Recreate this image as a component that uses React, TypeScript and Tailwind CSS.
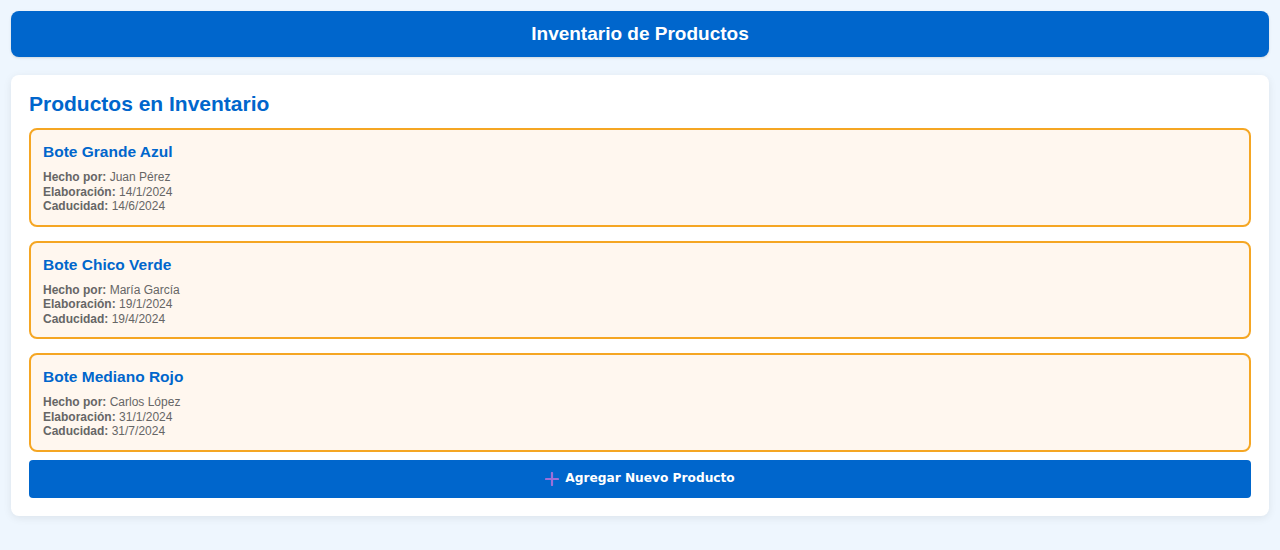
const products = [
  { name: "Bote Grande Azul", by: "Juan Pérez", made: "14/1/2024", exp: "14/6/2024" },
  { name: "Bote Chico Verde", by: "María García", made: "19/1/2024", exp: "19/4/2024" },
  { name: "Bote Mediano Rojo", by: "Carlos López", made: "31/1/2024", exp: "31/7/2024" },
];

const App = () => {
  return (
    <div className="min-h-[550px] bg-[#eef6fe] p-[11px] font-['Liberation_Sans',Arial,sans-serif]">
      <header className="flex h-[46px] items-center justify-center rounded-lg bg-[#0066cc] text-white shadow-sm">
        <h1 className="text-[19px] font-bold">Inventario de Productos</h1>
      </header>

      <main className="mt-[18px] rounded-lg bg-white px-[18px] pb-[18px] pt-[17px] shadow-[0_2px_8px_rgba(0,0,0,0.08)]">
        <h2 className="mb-[12px] text-[21px] font-bold leading-6 text-[#0066cc]">Productos en Inventario</h2>

        <div className="flex flex-col gap-[14px]">
          {products.map((p) => (
            <div key={p.name} className="rounded-lg border-2 border-[#f5a623] bg-[#fff7ef] px-3 pb-[11px] pt-[12px]">
              <h3 className="mb-[8px] text-[15.5px] font-bold leading-5 text-[#0066cc]">{p.name}</h3>
              <div className="text-[12px] leading-[14.5px] text-[#666]">
                <p><strong className="font-bold">Hecho por:</strong> {p.by}</p>
                <p><strong className="font-bold">Elaboración:</strong> {p.made}</p>
                <p><strong className="font-bold">Caducidad:</strong> {p.exp}</p>
              </div>
            </div>
          ))}
        </div>

        <button className="mt-[8px] flex h-[38px] w-full items-center justify-center gap-[6px] rounded bg-[#0066cc] font-['DejaVu_Sans',Tahoma,sans-serif] text-[12.2px] font-bold text-white">
          <svg width="14" height="14" viewBox="0 0 14 14">
            <path d="M7 1v12M1 7h12" stroke="#9b6fd8" strokeWidth="2.2" strokeLinecap="round" />
          </svg>
          Agregar Nuevo Producto
        </button>
      </main>
    </div>
  );
};

export default App;
